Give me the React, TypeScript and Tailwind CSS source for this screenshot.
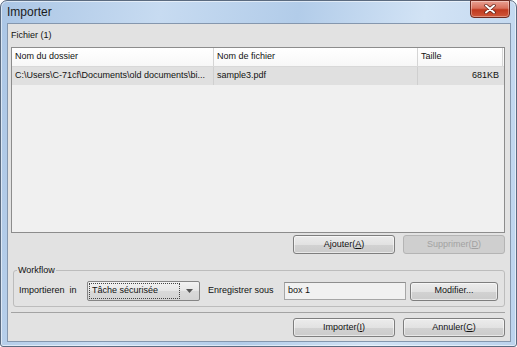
import React from 'react'

const font = "font-['Liberation_Sans',Arial,sans-serif]"

function Btn({ children, disabled }: { children: React.ReactNode; disabled?: boolean }) {
  return (
    <button
      type="button"
      className={`w-[102px] h-[19px] rounded-[3px] border flex items-center justify-center text-[9px] ${
        disabled
          ? 'border-[#b4b4b4] bg-[#cfcfcf] text-[#a2a2a2]'
          : 'border-[#7e7e7e] bg-[linear-gradient(180deg,#ececec_0%,#e2e2e2_50%,#d2d2d2_51%,#cbcbcb_100%)] text-[#111] shadow-[inset_0_0_0_1px_rgba(255,255,255,0.55)]'
      }`}
    >
      {children}
    </button>
  )
}

export default function App() {
  return (
    <div
      className={`${font} relative w-[517px] h-[347px] flex flex-col rounded-t-[7px] rounded-b-[3px] border border-[#5b6b80] bg-[linear-gradient(100deg,#abc6e5_0%,#c7dbf1_28%,#b2cce9_52%,#d2e3f5_74%,#bcd3ed_100%)] shadow-[inset_0_0_0_1px_rgba(255,255,255,0.55)] text-[#111]`}
    >
      {/* title bar */}
      <div className="h-[22px] flex items-center pl-[6px] text-[12px] text-[#1b1b1b]">Importer</div>
      <div className="absolute top-[-1px] right-[6px] w-[40px] h-[18px] rounded-b-[4px] border border-[#6e2a20] bg-[linear-gradient(180deg,#e9a193_0%,#d8705c_45%,#c0391f_55%,#d0573a_100%)] shadow-[inset_0_0_0_1px_rgba(255,255,255,0.35)] flex items-center justify-center">
        <svg viewBox="0 0 12 10" className="w-[12px] h-[10px]" aria-hidden="true">
          <path d="M2,1.5 L10,8.5 M10,1.5 L2,8.5" stroke="#5a1e15" strokeWidth="3.4" strokeLinecap="round" />
          <path d="M2,1.5 L10,8.5 M10,1.5 L2,8.5" stroke="#ffffff" strokeWidth="2" strokeLinecap="round" />
        </svg>
      </div>

      {/* client area */}
      <div className="ml-[6px] mr-[5px] mb-[4px] flex-1 border border-[#8597ae] bg-[#e2e2e2] flex flex-col pl-[3px] pr-[5px] text-[9px]">
        <div className="h-[23px] flex items-center">Fichier (1)</div>

        <div className="h-[186px] border border-[#8c8c8c] bg-[#f0f0f0] flex flex-col">
          <div className="h-[19px] flex bg-[linear-gradient(180deg,#ffffff_0%,#f7f7f7_100%)] border-b border-[#d8d8d8]">
            <div className="w-[202px] border-r border-[#d5d5d5] pl-[3px] flex items-center">Nom du dossier</div>
            <div className="w-[204px] border-r border-[#d5d5d5] pl-[3px] flex items-center">Nom de fichier</div>
            <div className="w-[85px] border-r border-[#d5d5d5] pl-[3px] flex items-center">Taille</div>
          </div>
          <div className="h-[18px] flex bg-[#e0e0e0]">
            <div className="w-[202px] border-r border-[#cfcfcf] pl-[3px] flex items-center overflow-hidden whitespace-nowrap">
              C:\Users\C-71cf\Documents\old documents\bi...
            </div>
            <div className="w-[204px] border-r border-[#cfcfcf] pl-[3px] flex items-center">sample3.pdf</div>
            <div className="w-[85px] pr-[4px] flex items-center justify-end">681KB</div>
          </div>
        </div>

        <div className="mt-[2px] flex justify-end gap-[8px]">
          <Btn>
            Ajouter(<u>A</u>)
          </Btn>
          <Btn disabled>
            Supprimer(<u>D</u>)
          </Btn>
        </div>

        <fieldset className="mt-[10px] ml-[2px] border border-[#bcbcbc] rounded-[3px] pl-[5px] pr-[6px] pt-[4px] pb-[5px]">
          <legend className="ml-[-2px] px-[1px] leading-[13px]">Workflow</legend>
          <div className="h-[20px] flex items-center">
            <span className="w-[68px] whitespace-pre">Importieren  in</span>
            <div className="w-[113px] h-[20px] rounded-[2px] border border-[#858585] bg-[linear-gradient(180deg,#f2f2f2_0%,#e6e6e6_50%,#d9d9d9_51%,#d4d4d4_100%)] flex items-center p-[1px]">
              <div className="flex-1 h-full border border-dotted border-[#444] pl-[2px] flex items-center">Tâche sécurisée</div>
              <div className="w-[18px] h-full flex items-center justify-center">
                <svg viewBox="0 0 7 4" className="w-[7px] h-[4px]" aria-hidden="true">
                  <path d="M0,0 L7,0 L3.5,4 Z" fill="#555" />
                </svg>
              </div>
            </div>
            <span className="w-[84px] pl-[8px]">Enregistrer sous</span>
            <div className="w-[122px] h-[18px] border border-[#a6a6a6] border-t-[#8e8e8e] bg-[#f1f1f1] pl-[3px] flex items-center">box 1</div>
            <div className="ml-[4px]">
              <button
                type="button"
                className="w-[88px] h-[19px] rounded-[3px] border border-[#7e7e7e] bg-[linear-gradient(180deg,#ececec_0%,#e2e2e2_50%,#d2d2d2_51%,#cbcbcb_100%)] shadow-[inset_0_0_0_1px_rgba(255,255,255,0.55)] text-[9px] flex items-center justify-center"
              >
                Modifier...
              </button>
            </div>
          </div>
        </fieldset>

        <div className="mt-[5px] h-[1px] bg-[#a3a3a3]" />

        <div className="mt-[5px] flex justify-end gap-[8px]">
          <Btn>
            Importer(<u>I</u>)
          </Btn>
          <Btn>
            Annuler(<u>C</u>)
          </Btn>
        </div>
      </div>
    </div>
  )
}
